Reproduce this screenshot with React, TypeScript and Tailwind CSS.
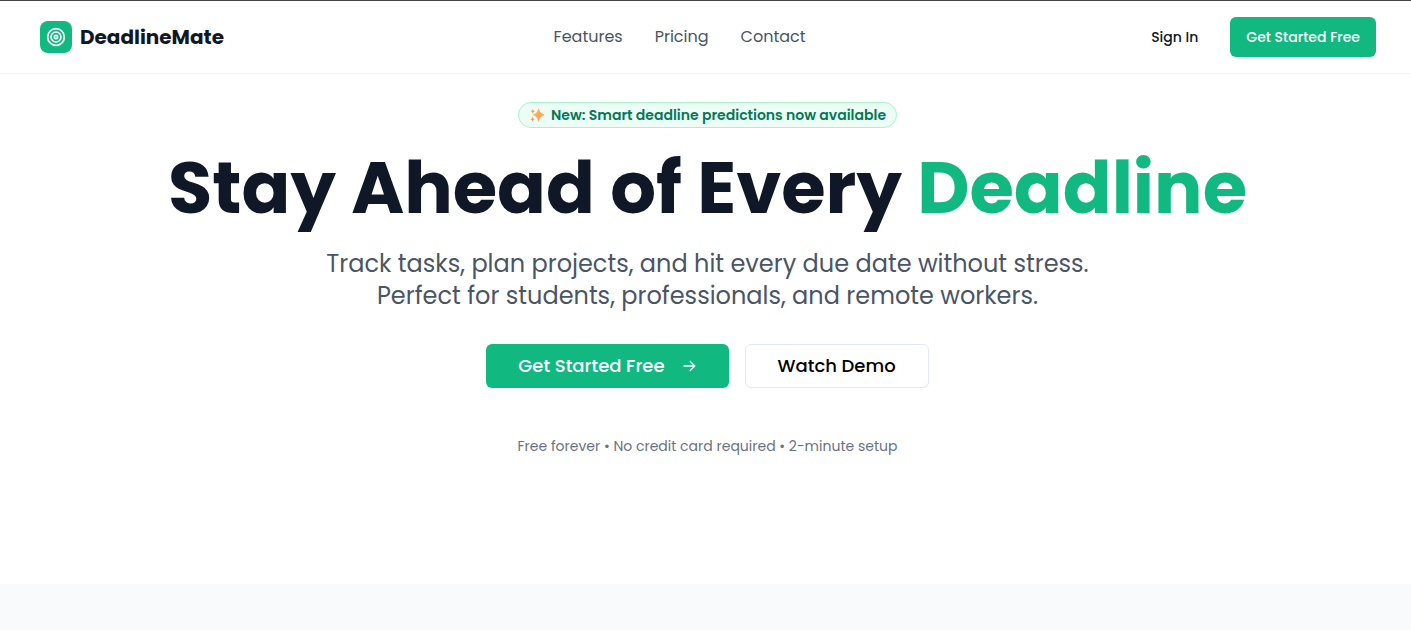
import React from "react";
import { Target } from "lucide-react";

const navLinks = ["Features", "Pricing", "Contact"];

function Sparkles() {
  return (
    <svg viewBox="0 0 16 16" className="h-4 w-4 shrink-0" aria-hidden="true">
      <defs>
        <linearGradient id="spark" x1="0" y1="0" x2="1" y2="1">
          <stop offset="0" stopColor="#fcc04f" />
          <stop offset="1" stopColor="#f98f5c" />
        </linearGradient>
      </defs>
      <path d="M9.600 1.600C10.700 5.400 11.600 6.600 15.200 7.800C11.600 9.200 10.700 10.400 9.600 14.400C8.500 10.400 7.600 9.200 4.200 7.800C7.600 6.600 8.500 5.400 9.600 1.600Z" fill="url(#spark)" stroke="#fba957" strokeWidth="0.500" strokeLinejoin="round" />
      <path d="M3.800 1.500C4.200 3.500 4.600 3.900 6.400 4.300C4.600 4.700 4.200 5.100 3.800 7C3.400 5.100 3 4.700 1.200 4.300C3 3.900 3.400 3.500 3.800 1.500Z" fill="#fb9a5a" />
      <path d="M3.600 9.600C4 11.500 4.400 11.900 6 12.300C4.400 12.700 4 13.100 3.600 15C3.200 13.100 2.800 12.700 1.200 12.300C2.800 11.900 3.200 11.500 3.600 9.600Z" fill="#f98a6c" />
    </svg>
  );
}

function Arrow() {
  return (
    <svg viewBox="0 0 14 14" className="h-3.5 w-3.5" fill="none" stroke="currentColor" strokeWidth="1.3" aria-hidden="true">
      <path d="M0.500 7H11.500M6.800 2L11.800 7L6.800 12" />
    </svg>
  );
}

function Header() {
  return (
    <header className="border-t border-b border-t-[#444444] border-b-gray-100">
      <div className="flex h-18 items-center justify-between pr-[35px] pl-10">
        <a href="#" className="flex items-center gap-2">
          <span className="flex h-8 w-8 items-center justify-center rounded-lg bg-[#11b981] text-white">
            <Target size={20} />
          </span>
          <span className="text-xl font-bold text-gray-900">DeadlineMate</span>
        </a>
        <nav className="flex items-center gap-8 text-base text-gray-600">
          {navLinks.map((label) => (
            <a key={label} href={`#${label.toLowerCase()}`}>{label}</a>
          ))}
        </nav>
        <div className="flex items-center gap-4">
          <a href="#signin" className="px-4 text-sm font-medium text-gray-900">Sign In</a>
          <button type="button" className="h-10 rounded-md bg-[#11b981] px-4 text-sm font-medium text-white">
            Get Started Free
          </button>
        </div>
      </div>
    </header>
  );
}

export default function App() {
  return (
    <div className="min-h-screen bg-white font-['Poppins','Inter',sans-serif] text-gray-900">
      <Header />
      <main>
        <section className="flex flex-col items-center pt-7 pb-32 pl-1 text-center">
          <div className="flex h-[26px] items-center gap-1.5 rounded-full border border-[#a7f3d0] bg-[#ecfdf5] px-[10px] text-sm font-semibold text-[#047857]">
            <Sparkles />
            New: Smart deadline predictions now available
          </div>
          <h1 className="mt-6 text-7xl leading-[72px] font-bold whitespace-nowrap">
            Stay Ahead of Every <span className="text-[#11b981]">Deadline</span>
          </h1>
          <p className="mt-6 text-2xl text-gray-600">
            Track tasks, plan projects, and hit every due date without stress.
            <br />
            Perfect for students, professionals, and remote workers.
          </p>
          <div className="mt-8 flex gap-4">
            <button type="button" className="flex h-11 items-center gap-[18px] rounded-md bg-[#11b981] px-8 text-lg font-medium text-white">
              Get Started Free
              <Arrow />
            </button>
            <button type="button" className="h-11 rounded-md border border-slate-200 bg-white px-8 text-lg font-medium text-black">
              Watch Demo
            </button>
          </div>
          <p className="mt-12 text-sm text-gray-500">
            Free forever • No credit card required • 2-minute setup
          </p>
        </section>
        <section className="h-[46px] bg-[#f8fafc]" />
      </main>
    </div>
  );
}
